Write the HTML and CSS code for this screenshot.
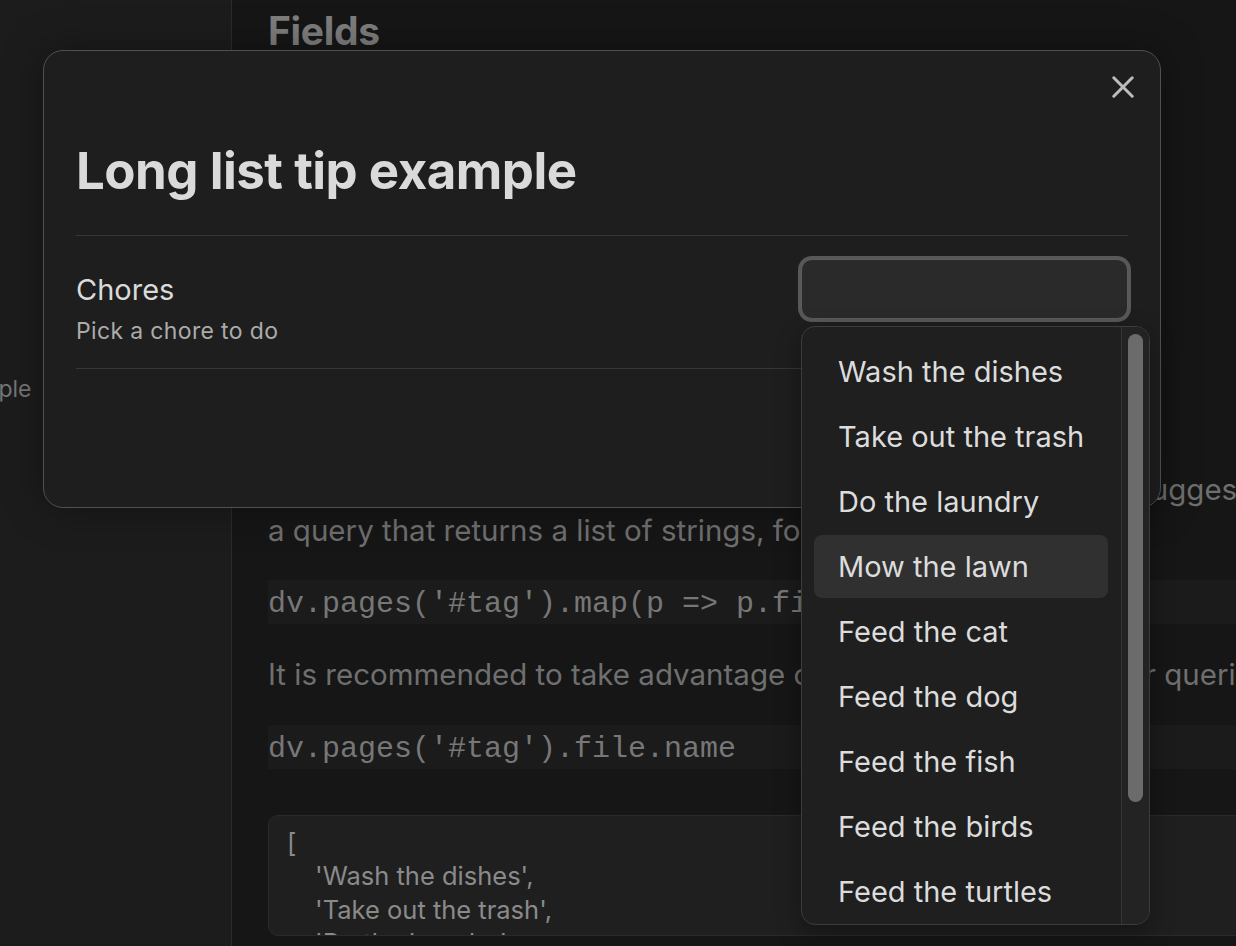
FILE: index.html
```html
<!DOCTYPE html>
<html lang="en">
<head>
<meta charset="utf-8">
<title>Long list tip example</title>
<link rel="stylesheet" href="styles.css">
</head>
<body>
<div class="app">
  <aside class="sidebar">
    <div class="nav-item"><span class="nav-title">Long list tip example</span></div>
  </aside>
  <main class="main">
    <div class="doc">
      <h1 class="doc-title">Fields</h1>
      <p>Each field of the form is described by an object<br>with a name, a label, a description and a type.<br>Supported types are text, number, date, toggle,<br>select, multiselect and dataview.</p>
      <p>The select type needs a list of options,<br>which may be long when there are many<br>choices to offer.</p>
      <p>For dataview fields<br>Instead of a static list you could write Dataview queries which suggest<br>a query that returns a list of strings, for example:</p>
      <pre class="code-inline">dv.pages('#tag').map(p =&gt; p.file.name)</pre>
      <p>It is recommended to take advantage of all the metadata in your queries</p>
      <pre class="code-inline">dv.pages('#tag').file.name</pre>
      <div class="code-block">
        <div class="code-line">[</div>
        <div class="code-line indent">'Wash the dishes',</div>
        <div class="code-line indent">'Take out the trash',</div>
        <div class="code-line indent">'Do the laundry',</div>
        <div class="code-line indent">'Mow the lawn',</div>
      </div>
    </div>
  </main>
</div>

<div class="modal">
  <button class="modal-close" type="button" aria-label="Close">
    <svg viewBox="0 0 22 22" width="22" height="22"><path d="M1.8 1.8 L20.2 20.2 M20.2 1.8 L1.8 20.2" /></svg>
  </button>
  <h2 class="modal-title">Long list tip example</h2>
  <div class="setting">
    <div class="setting-info">
      <div class="setting-name">Chores</div>
      <div class="setting-desc">Pick a chore to do</div>
    </div>
    <div class="setting-control">
      <input class="text-input" type="text">
      <div class="suggest">
        <div class="suggest-list">
          <div class="suggest-item">Wash the dishes</div>
          <div class="suggest-item">Take out the trash</div>
          <div class="suggest-item">Do the laundry</div>
          <div class="suggest-item is-selected">Mow the lawn</div>
          <div class="suggest-item">Feed the cat</div>
          <div class="suggest-item">Feed the dog</div>
          <div class="suggest-item">Feed the fish</div>
          <div class="suggest-item">Feed the birds</div>
          <div class="suggest-item">Feed the turtles</div>
          <div class="suggest-item">Water the plants</div>
          <div class="suggest-item">Vacuum the floor</div>
        </div>
        <div class="suggest-scroll"><div class="suggest-thumb"></div></div>
      </div>
    </div>
  </div>
</div>
</body>
</html>
```

FILE: styles.css
```css
* { box-sizing: border-box; }

html, body {
  margin: 0;
  height: 100%;
}

body {
  background: #161616;
  font-family: Inter, "Noto Sans", sans-serif;
  overflow: hidden;
  position: relative;
}

.app {
  display: flex;
  height: 946px;
}

/* sidebar */
.sidebar {
  width: 232px;
  flex: none;
  background: #1c1c1c;
  border-right: 1px solid #2b2b2b;
  padding-top: 372px;
  overflow: hidden;
}

.nav-item {
  font-size: 23px;
  line-height: 34px;
  color: #767676;
  white-space: nowrap;
}

.nav-title {
  display: inline-block;
  margin-left: -192px;
}

/* main document */
.main {
  flex: 1;
  overflow: hidden;
  background: #161616;
  padding: 8px 0 0 36px;
}

.doc {
  width: 1500px;
}

.doc-title {
  margin: 0;
  padding-bottom: 10px;
  font-size: 39px;
  line-height: 46px;
  font-weight: 700;
  color: #7e7e7e;
  letter-spacing: -0.3px;
}

.doc p {
  margin: 27px 0;
  font-size: 29.5px;
  line-height: 40.5px;
  color: #6f6f6f;
  white-space: nowrap;
}

.code-inline {
  margin: 30px 0;
  padding: 4px 0 0;
  background: #1b1b1b;
  font-family: "Liberation Mono", "DejaVu Sans Mono", monospace;
  font-size: 30px;
  line-height: 40px;
  color: #777777;
}

.code-block {
  margin-top: 46px;
  height: 121px;
  overflow: hidden;
  background: #1f1f1f;
  border: 1px solid #2a2a2a;
  border-radius: 10px;
  padding: 10px 18px 0;
  font-size: 25.5px;
  line-height: 33.5px;
  color: #8a8a8a;
}

.code-line.indent {
  padding-left: 28px;
}

/* modal */
.modal {
  position: absolute;
  left: 43px;
  top: 50px;
  width: 1118px;
  height: 458px;
  padding: 90px 32px 0;
  background: #1e1e1e;
  border: 1px solid #505050;
  border-radius: 20px;
  box-shadow: 0 0 40px rgba(0, 0, 0, 0.35);
}

.modal-close {
  position: absolute;
  top: 25px;
  right: 26px;
  width: 22px;
  height: 22px;
  padding: 0;
  border: 0;
  background: none;
  display: flex;
}

.modal-close svg path {
  stroke: #bdbdbd;
  stroke-width: 3;
  stroke-linecap: round;
  fill: none;
}

.modal-title {
  margin: 0 0 34px;
  font-size: 51px;
  line-height: 60px;
  font-weight: 700;
  letter-spacing: -0.5px;
  color: #dadada;
}

.setting {
  display: flex;
  justify-content: space-between;
  align-items: flex-start;
  padding: 20px 0 22px;
  border-top: 1px solid #363636;
  border-bottom: 1px solid #363636;
}

.setting-info {
  padding-top: 16px;
}

.setting-name {
  font-size: 29px;
  line-height: 35px;
  color: #dadada;
}

.setting-desc {
  margin-top: 9px;
  font-size: 23px;
  line-height: 30px;
  letter-spacing: 0.35px;
  color: #ababab;
}

.setting-control {
  position: relative;
  width: 327px;
  flex: none;
}

.text-input {
  display: block;
  width: 100%;
  height: 60px;
  margin-top: 3px;
  background: #2a2a2a;
  border: 1px solid #5c5c5c;
  border-radius: 11px;
  box-shadow: 0 0 0 3px #585858;
  outline: none;
}

/* suggestion popover */
.suggest {
  position: absolute;
  top: 70px;
  left: 0;
  width: 349px;
  height: 599px;
  display: flex;
  background: #1f1f1f;
  border: 1px solid #3c3c3c;
  border-radius: 14px;
  overflow: hidden;
  box-shadow: 0 8px 24px rgba(0, 0, 0, 0.35);
}

.suggest-list {
  flex: 1;
  padding: 13px 13px 0 12px;
  overflow: hidden;
}

.suggest-item {
  height: 63px;
  margin-bottom: 2px;
  padding-left: 24px;
  display: flex;
  align-items: center;
  font-size: 29px;
  color: #dcdcdc;
  border-radius: 8px;
  white-space: nowrap;
}

.suggest-item.is-selected {
  background: #303030;
}

.suggest-scroll {
  width: 28px;
  flex: none;
  border-left: 1px solid #353535;
  background: #232323;
  padding: 7px 6px 0;
}

.suggest-thumb {
  height: 468px;
  background: #6b6b6b;
  border-radius: 8px;
}
```
